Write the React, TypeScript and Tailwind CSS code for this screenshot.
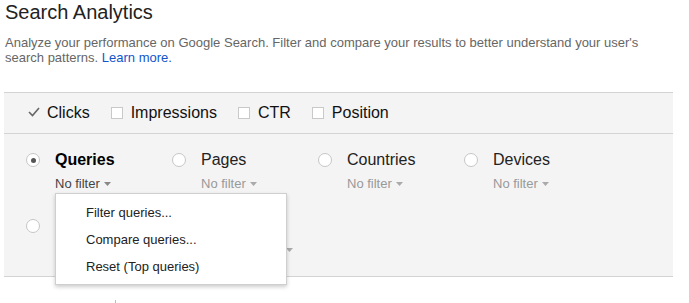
import React from "react";

const Arrow = ({ color = "#999" }: { color?: string }) => (
  <svg width="7" height="4" viewBox="0 0 7 4" className="inline-block">
    <polygon points="0,0 7,0 3.5,4" fill={color} />
  </svg>
);

const Radio = ({ checked = false }: { checked?: boolean }) => (
  <div className="mt-[3px] flex h-[14px] w-[14px] shrink-0 items-center justify-center rounded-full border border-[#c6c6c6] bg-white">
    {checked && <div className="h-[5px] w-[5px] rounded-full bg-[#555]" />}
  </div>
);

const Item = ({
  label,
  filter,
  checked = false,
  bold = false,
  dark = false,
  hidden = false,
  arrowGap = "ml-[4px]",
}: {
  label: string;
  filter: string;
  checked?: boolean;
  bold?: boolean;
  dark?: boolean;
  hidden?: boolean;
  arrowGap?: string;
}) => (
  <div className="flex items-start gap-[15px]">
    <Radio checked={checked} />
    <div className="flex flex-col gap-[6px]">
      <div className={`text-[16px] leading-[20px] ${bold ? "font-bold text-black" : "text-[#222]"} ${hidden ? "invisible" : ""}`}>
        {label}
      </div>
      <div className={`flex items-center text-[13px] leading-[16px] whitespace-nowrap ${dark ? "text-[#444]" : "text-[#999]"}`}>
        <span className={hidden ? "invisible" : ""}>{filter}</span>
        <span className={`${arrowGap} flex items-center`}>
          <Arrow color={dark ? "#888" : "#aaa"} />
        </span>
      </div>
    </div>
  </div>
);

const Box = () => <div className="h-[12px] w-[12px] border border-[#c9c9c9] bg-white" />;

export default function App() {
  return (
    <div
      className="relative h-[303px] w-[689px] overflow-hidden bg-white"
      style={{ fontFamily: '"Liberation Sans", Arial, sans-serif' }}
    >
      <div className="pl-[5px]">
        <h1 className="text-[20px] leading-[24px] font-normal text-[#222]">Search Analytics</h1>
        <p className="mt-[11px] w-[660px] text-[13px] leading-[15px] text-[#666]">
          Analyze your performance on Google Search. Filter and compare your results to better understand your user's search patterns.{" "}
          <span className="text-[#1155cc]">Learn more.</span>
        </p>
      </div>

      <div className="mt-[27px] ml-[4px] w-[669px] border-t border-b border-[#d3d3d3] bg-[#f4f4f4]">
        <div className="flex h-[40px] items-center pl-[24px] text-[16px] text-[#111]">
          <div className="flex items-center">
            <svg width="12" height="10" viewBox="0 0 12 10" className="mt-[-2px]">
              <polyline points="1,5 4.5,8.5 11,1" fill="none" stroke="#666" strokeWidth="1.6" />
            </svg>
            <span className="ml-[7px]">Clicks</span>
          </div>
          <div className="ml-[21px] flex items-center gap-[8px]">
            <Box />
            <span>Impressions</span>
          </div>
          <div className="ml-[21px] flex items-center gap-[8px]">
            <Box />
            <span>CTR</span>
          </div>
          <div className="ml-[21px] flex items-center gap-[8px]">
            <Box />
            <span>Position</span>
          </div>
        </div>
        <div className="border-t border-[#d3d3d3]">
          <div className="grid h-[142px] grid-cols-[146px_146px_146px_146px] content-start gap-y-[24px] pt-[16px] pl-[22px]">
            <Item label="Queries" filter="No filter" checked bold dark />
            <Item label="Pages" filter="No filter" />
            <Item label="Countries" filter="No filter" />
            <Item label="Devices" filter="No filter" />
            <Item label="Search Appearance" filter="No filter" hidden />
            <Item label="Dates" filter="Last 28 days" arrowGap="ml-[11px]" hidden />
          </div>
        </div>
      </div>

      <div className="absolute top-[300px] left-[115px] h-[3px] w-px bg-[#bbb]" />

      <div className="absolute top-[193px] left-[55px] h-[92px] w-[232px] border border-[#cfcfcf] bg-white pt-[5px] shadow-[0_2px_4px_rgba(0,0,0,0.2)]">
        {["Filter queries...", "Compare queries...", "Reset (Top queries)"].map((t) => (
          <div key={t} className="h-[27px] pl-[30px] text-[13px] leading-[27px] text-[#222]">
            {t}
          </div>
        ))}
      </div>
    </div>
  );
}
